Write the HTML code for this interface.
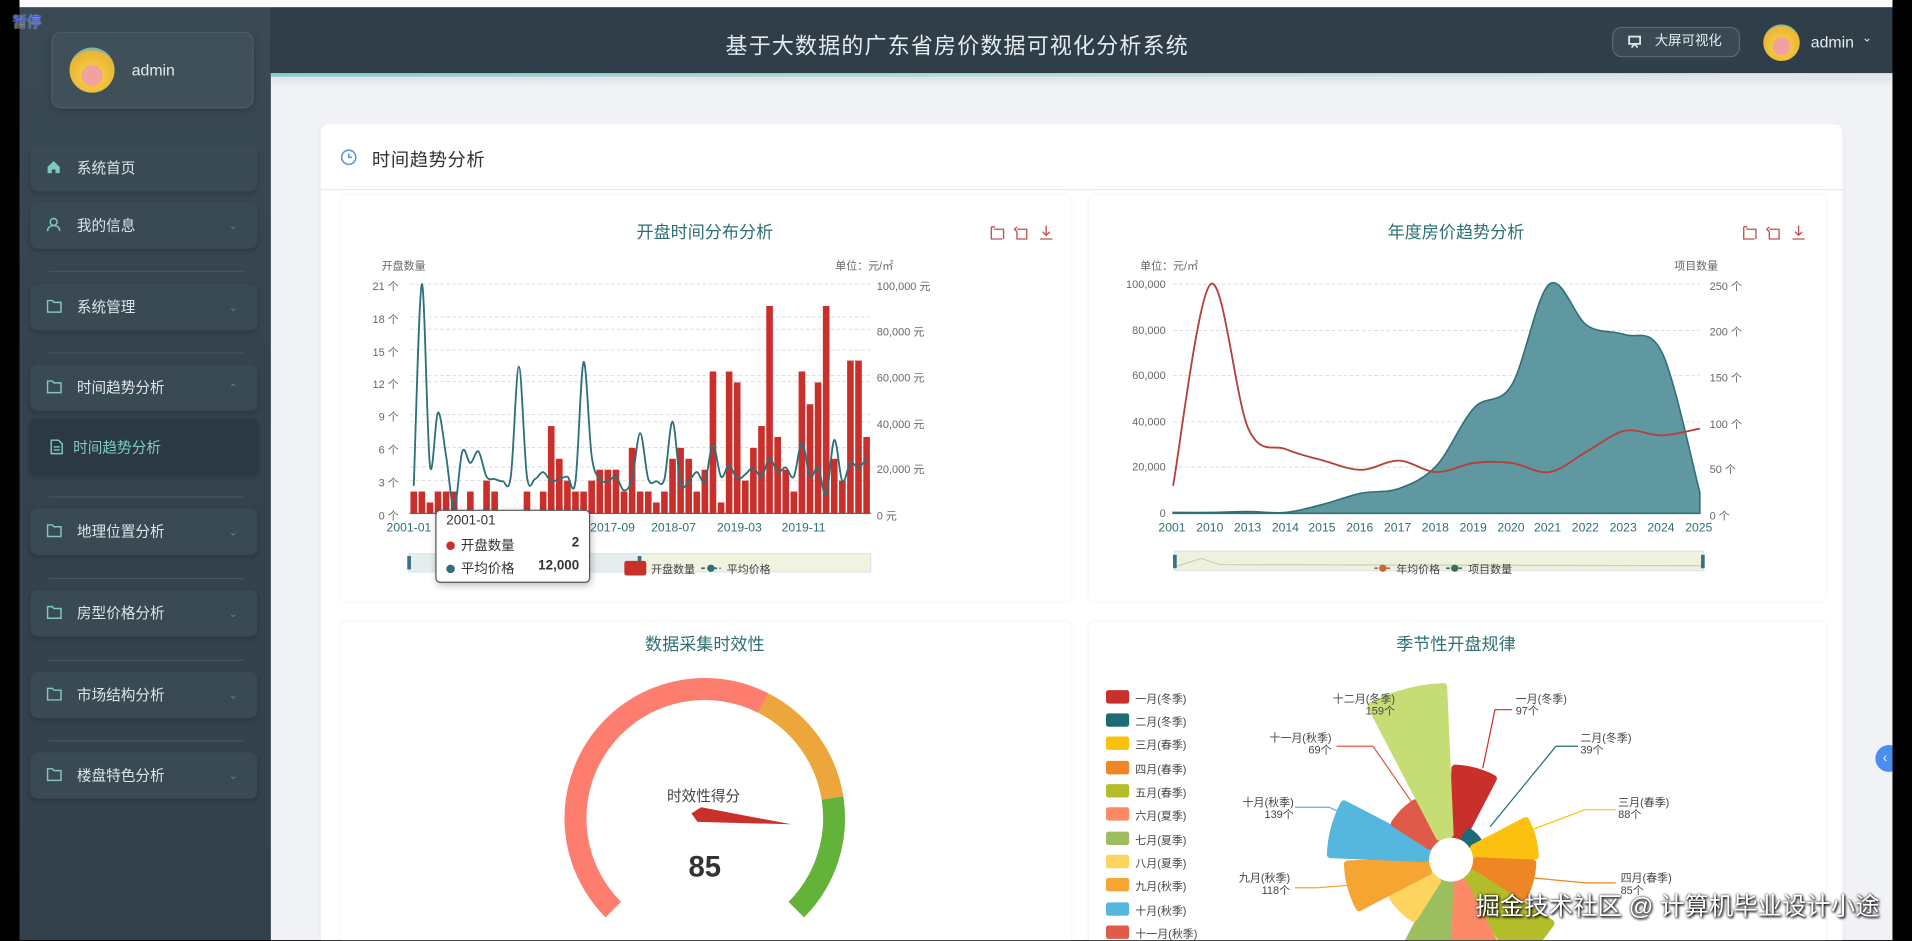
<!DOCTYPE html>
<html><head><meta charset="utf-8">
<style>
*{margin:0;padding:0;box-sizing:border-box}
html,body{width:1912px;height:941px;overflow:hidden;background:#000;font-family:"Liberation Sans","Noto Sans CJK SC",sans-serif}
#s{position:absolute;left:0;top:0;width:1568px;height:771px;transform:scale(1.21939);transform-origin:0 0;overflow:hidden;background:#000}
.a{position:absolute}
.side{left:16px;top:6px;width:206px;height:766px;background:linear-gradient(180deg,#3a4a54,#34434e 40%,#33414c)}
.mi{position:absolute;left:25px;width:186px;height:38px;border-radius:6px;background:#3a4a54;box-shadow:0 2px 4px rgba(0,0,0,.18);color:#dde4e8;font-size:12px;line-height:38px;padding-left:38px}
.mi svg{position:absolute;left:13px;top:12px}
.mi .ch{position:absolute;right:16px;top:0;color:#6b7c86;font-size:9px}
.sep{position:absolute;left:40px;width:160px;height:1px;background:#46565f}
.t{position:absolute;white-space:nowrap}
.ax{font-size:9px;color:#666}
.ttl{font-size:14px;color:#2e6f73;transform:translateX(-50%)}
.panel{position:absolute;background:#fff;border-radius:4px;box-shadow:0 0 4px rgba(0,0,0,.06)}
.lg{font-size:9px;color:#444}
</style></head><body>
<div id="s">
<div class="a" style="left:16px;top:0;width:1536px;height:6px;background:#fbfbfb"></div>
<div class="a" style="left:222px;top:60px;width:1330px;height:712px;background:#f0f2f5"></div>
<div class="a" style="left:222px;top:6px;width:1330px;height:54px;background:#2f3e48"></div>
<div class="a" style="left:222px;top:60px;width:1330px;height:3px;background:linear-gradient(90deg,#8ccaca,#b9dcdc 50%,#dfe9ea);box-shadow:0 3px 6px rgba(0,0,0,.15)"></div>
<div class="t" style="left:785px;top:24px;transform:translateX(-50%);font-size:18px;color:#e6ecef;letter-spacing:1px">基于大数据的广东省房价数据可视化分析系统</div>
<div class="a" style="left:1322px;top:22px;width:105px;height:25px;border-radius:8px;background:#3a4a55;border:1px solid #5a6a75;color:#e6ecef;font-size:11px;line-height:23px;padding-left:34px">大屏可视化</div>
<svg class="a" style="left:1335px;top:29px" width="11" height="11" viewBox="0 0 11 11"><rect x="1" y="1" width="9" height="6" fill="none" stroke="#dfe6ea" stroke-width="1.5"/><path d="M3 10l2.5-3 2.5 3" stroke="#dfe6ea" stroke-width="1.4" fill="none"/></svg>
<div class="a" style="left:1446px;top:20px;width:30px;height:30px;border-radius:50%;background:radial-gradient(circle at 50% 60%,#f2a0a0 0 30%,#f2c640 32%,#e8b534 70%,#7fb6a5 72%)"></div>
<div class="t" style="left:1485px;top:27px;color:#e6ecef;font-size:13px">admin</div>
<div class="t" style="left:1527px;top:26px;color:#dfe6ea;font-size:10px">&#8964;</div>

<div class="a side"></div>
<div class="t" style="left:10px;top:9px;color:#3d58d8;font-size:12px;text-shadow:0 0 1px #fff">暂停</div>
<div class="a" style="left:42px;top:26px;width:166px;height:63px;border-radius:8px;background:#3f5059;border:1px solid #4c5d66;box-shadow:0 2px 6px rgba(0,0,0,.2)"></div>
<div class="a" style="left:57px;top:39px;width:37px;height:37px;border-radius:50%;background:radial-gradient(circle at 50% 62%,#f2a0a0 0 28%,#f2c640 30%,#e8b534 68%,#7fb6a5 72%)"></div>
<div class="t" style="left:108px;top:50px;color:#e2e8ec;font-size:13px">admin</div>

<div class="mi" style="top:119px"><svg width="12" height="12" viewBox="0 0 12 12"><path d="M6 1L1 6v5h3.5V8h3v3H11V6z" fill="#7ec8c0"/></svg>系统首页</div>
<div class="mi" style="top:166px"><svg width="12" height="12" viewBox="0 0 12 12"><circle cx="6" cy="4" r="2.8" fill="none" stroke="#7ec8c0" stroke-width="1.2"/><path d="M1 11.5c0-3 2.2-4.5 5-4.5s5 1.5 5 4.5" fill="none" stroke="#7ec8c0" stroke-width="1.2"/></svg>我的信息<span class="ch">&#8964;</span></div>
<div class="sep" style="top:222px"></div>
<div class="mi" style="top:233px"><svg width="13" height="12" viewBox="0 0 13 12"><path d="M1 1.5h4l1.2 1.5H12v8H1z" fill="none" stroke="#7ec8c0" stroke-width="1.2"/></svg>系统管理<span class="ch">&#8964;</span></div>
<div class="sep" style="top:289px"></div>
<div class="mi" style="top:299px"><svg width="13" height="12" viewBox="0 0 13 12"><path d="M1 1.5h4l1.2 1.5H12v8H1z" fill="none" stroke="#7ec8c0" stroke-width="1.2"/></svg>时间趋势分析<span class="ch">&#8963;</span></div>
<div class="a" style="left:24px;top:343px;width:188px;height:45px;border-radius:6px;background:#2b3944;box-shadow:0 2px 5px rgba(0,0,0,.2)"></div>
<svg class="a" style="left:41px;top:360px" width="11" height="13" viewBox="0 0 11 13"><path d="M1 1h6l3 3v8H1z" fill="none" stroke="#7ec8c0" stroke-width="1.2"/><path d="M3 6.5h5M3 9h5" stroke="#7ec8c0" stroke-width="1.1"/></svg>
<div class="t" style="left:60px;top:358px;color:#7ec8c8;font-size:12px">时间趋势分析</div>
<div class="sep" style="top:407px"></div>
<div class="mi" style="top:417px"><svg width="13" height="12" viewBox="0 0 13 12"><path d="M1 1.5h4l1.2 1.5H12v8H1z" fill="none" stroke="#7ec8c0" stroke-width="1.2"/></svg>地理位置分析<span class="ch">&#8964;</span></div>
<div class="sep" style="top:474px"></div>
<div class="mi" style="top:484px"><svg width="13" height="12" viewBox="0 0 13 12"><path d="M1 1.5h4l1.2 1.5H12v8H1z" fill="none" stroke="#7ec8c0" stroke-width="1.2"/></svg>房型价格分析<span class="ch">&#8964;</span></div>
<div class="sep" style="top:541px"></div>
<div class="mi" style="top:551px"><svg width="13" height="12" viewBox="0 0 13 12"><path d="M1 1.5h4l1.2 1.5H12v8H1z" fill="none" stroke="#7ec8c0" stroke-width="1.2"/></svg>市场结构分析<span class="ch">&#8964;</span></div>
<div class="sep" style="top:607px"></div>
<div class="mi" style="top:617px"><svg width="13" height="12" viewBox="0 0 13 12"><path d="M1 1.5h4l1.2 1.5H12v8H1z" fill="none" stroke="#7ec8c0" stroke-width="1.2"/></svg>楼盘特色分析<span class="ch">&#8964;</span></div>

<div class="a" style="left:263px;top:102px;width:1248px;height:680px;background:#fff;border-radius:6px;box-shadow:0 1px 4px rgba(0,0,0,.06)"></div>
<svg class="a" style="left:279px;top:122px" width="14" height="14" viewBox="0 0 14 14"><circle cx="7" cy="7" r="5.8" fill="none" stroke="#5b9bd5" stroke-width="1.3"/><path d="M7 3.8V7h2.6" fill="none" stroke="#5b9bd5" stroke-width="1.3"/></svg>
<div class="t" style="left:305px;top:120px;font-size:15px;color:#303133;letter-spacing:.5px">时间趋势分析</div>
<div class="a" style="left:263px;top:155px;width:1248px;height:1px;background:#e6e9ee"></div>

<div class="panel" style="left:280px;top:160px;width:598px;height:333px"></div>
<div class="panel" style="left:893px;top:160px;width:604px;height:333px"></div>
<div class="panel" style="left:280px;top:510px;width:598px;height:270px"></div>
<div class="panel" style="left:893px;top:510px;width:604px;height:270px"></div>

<div class="t ttl" style="left:578px;top:180px">开盘时间分布分析</div>
<div class="t ttl" style="left:1194px;top:180px">年度房价趋势分析</div>
<div class="t ttl" style="left:578px;top:518px">数据采集时效性</div>
<div class="t ttl" style="left:1194px;top:518px">季节性开盘规律</div>

<div class="t ax" style="left:313px;top:211px">开盘数量</div>
<div class="t ax" style="left:685px;top:211px">单位：元/㎡</div>
<div class="t ax" style="left:300px;top:228px;width:27px;text-align:right">21 个</div>
<div class="t ax" style="left:300px;top:255px;width:27px;text-align:right">18 个</div>
<div class="t ax" style="left:300px;top:282px;width:27px;text-align:right">15 个</div>
<div class="t ax" style="left:300px;top:308px;width:27px;text-align:right">12 个</div>
<div class="t ax" style="left:300px;top:335px;width:27px;text-align:right">9 个</div>
<div class="t ax" style="left:300px;top:362px;width:27px;text-align:right">6 个</div>
<div class="t ax" style="left:300px;top:389px;width:27px;text-align:right">3 个</div>
<div class="t ax" style="left:300px;top:416px;width:27px;text-align:right">0 个</div>
<div class="t ax" style="left:719px;top:228px">100,000 元</div>
<div class="t ax" style="left:719px;top:265px">80,000 元</div>
<div class="t ax" style="left:719px;top:303px">60,000 元</div>
<div class="t ax" style="left:719px;top:341px">40,000 元</div>
<div class="t ax" style="left:719px;top:378px">20,000 元</div>
<div class="t ax" style="left:719px;top:416px">0 元</div>
<div class="t ax" style="left:317px;top:428px;color:#2e6f73;font-size:10px">2001-01</div>
<div class="t ax" style="left:484px;top:428px;color:#2e6f73;font-size:10px">2017-09</div>
<div class="t ax" style="left:534px;top:428px;color:#2e6f73;font-size:10px">2018-07</div>
<div class="t ax" style="left:588px;top:428px;color:#2e6f73;font-size:10px">2019-03</div>
<div class="t ax" style="left:641px;top:428px;color:#2e6f73;font-size:10px">2019-11</div>

<div class="t ax" style="left:935px;top:211px">单位：元/㎡</div>
<div class="t ax" style="left:1373px;top:211px">项目数量</div>
<div class="t ax" style="left:910px;top:228px;width:46px;text-align:right">100,000</div>
<div class="t ax" style="left:910px;top:266px;width:46px;text-align:right">80,000</div>
<div class="t ax" style="left:910px;top:303px;width:46px;text-align:right">60,000</div>
<div class="t ax" style="left:910px;top:341px;width:46px;text-align:right">40,000</div>
<div class="t ax" style="left:910px;top:378px;width:46px;text-align:right">20,000</div>
<div class="t ax" style="left:910px;top:416px;width:46px;text-align:right">0</div>
<div class="t ax" style="left:1402px;top:228px">250 个</div>
<div class="t ax" style="left:1402px;top:265px">200 个</div>
<div class="t ax" style="left:1402px;top:303px">150 个</div>
<div class="t ax" style="left:1402px;top:341px">100 个</div>
<div class="t ax" style="left:1402px;top:378px">50 个</div>
<div class="t ax" style="left:1402px;top:416px">0 个</div>
<div class="t ax" style="left:950px;top:428px;font-size:10px;color:#2e6f73">
<span style="position:absolute;left:0">2001</span><span style="position:absolute;left:31px">2010</span><span style="position:absolute;left:62px">2013</span><span style="position:absolute;left:93px">2014</span><span style="position:absolute;left:123px">2015</span><span style="position:absolute;left:154px">2016</span><span style="position:absolute;left:185px">2017</span><span style="position:absolute;left:216px">2018</span><span style="position:absolute;left:247px">2019</span><span style="position:absolute;left:278px">2020</span><span style="position:absolute;left:308px">2021</span><span style="position:absolute;left:339px">2022</span><span style="position:absolute;left:370px">2023</span><span style="position:absolute;left:401px">2024</span><span style="position:absolute;left:432px">2025</span></div>

<svg class="a" style="left:0;top:0" width="1568" height="771" id="cv">
<g stroke="#ddd" stroke-dasharray="3,2" stroke-width="0.8">
<line x1="336" y1="233" x2="714" y2="233"/><line x1="336" y1="260" x2="714" y2="260"/><line x1="336" y1="287" x2="714" y2="287"/><line x1="336" y1="313" x2="714" y2="313"/><line x1="336" y1="340" x2="714" y2="340"/><line x1="336" y1="367" x2="714" y2="367"/><line x1="336" y1="394" x2="714" y2="394"/>
<line x1="336" y1="270" x2="714" y2="270"/><line x1="336" y1="308" x2="714" y2="308"/><line x1="336" y1="346" x2="714" y2="346"/><line x1="336" y1="383" x2="714" y2="383"/>
<line x1="962" y1="233" x2="1394" y2="233"/><line x1="962" y1="271" x2="1394" y2="271"/><line x1="962" y1="308" x2="1394" y2="308"/><line x1="962" y1="346" x2="1394" y2="346"/><line x1="962" y1="383" x2="1394" y2="383"/>
</g>
<line x1="336" y1="421" x2="714" y2="421" stroke="#2e6f73"/><line x1="962" y1="421" x2="1394" y2="421" stroke="#2e6f73"/>
<g id="bars" fill="#c9302c"></g>
<path id="l1" fill="none" stroke="#2e6f7a" stroke-width="1.5"/>
<path id="ar" fill="#5f98a0" stroke="#2e6f7a" stroke-width="1.3"/>
<path id="l2" fill="none" stroke="#b5403a" stroke-width="1.5"/>
<g fill="none" stroke="#c0504d" stroke-width="1.1">
<path d="M813 186v10h9M815 188h8v8M816 186h-3"/><path d="M834 188h8v8h-8v-6M834 186l-2 2 2 2"/><path d="M858 185v8M855 190l3 3 3-3M853 196h10"/>
<path d="M1430 186v10h9M1432 188h8v8M1433 186h-3"/><path d="M1451 188h8v8h-8v-6M1451 186l-2 2 2 2"/><path d="M1475 185v8M1472 190l3 3 3-3M1470 196h10"/>
</g>
<rect x="335" y="454" width="379" height="15" fill="#eff3e0" stroke="#dfe4ea"/>
<rect x="335" y="454" width="190" height="15" fill="#e3e9f2" opacity=".7"/>
<rect x="334" y="456" width="3" height="11" fill="#3a6f86"/><rect x="523" y="456" width="3" height="11" fill="#3a6f86"/>
<rect x="963" y="452" width="434" height="16" fill="#eef2dc" stroke="#dfe4ea"/>
<path d="M963 465 L985 458 L1000 463 L1397 464" stroke="#c8cfc0" fill="none"/>
<rect x="962" y="455" width="3" height="11" fill="#3a6f86"/><rect x="1395" y="455" width="3" height="11" fill="#3a6f86"/>
<rect x="512" y="460" width="18" height="12" rx="2" fill="#c9302c"/>
<path d="M575 466h16" stroke="#2e6f7a" stroke-width="1.5" stroke-dasharray="3,2"/><circle cx="583" cy="466" r="3" fill="#2e6f7a"/>
<path d="M1127 466h14" stroke="#d0623a" stroke-width="1.5" stroke-dasharray="3,2"/><circle cx="1134" cy="466" r="3" fill="#d0623a"/>
<path d="M1186 466h14" stroke="#3a6f5a" stroke-width="1.5" stroke-dasharray="3,2"/><circle cx="1193" cy="466" r="3" fill="#3a6f5a"/>
<g fill="none" stroke-width="18">
<path d="M503 746 A106 106 0 0 1 626.1 576.6" stroke="#fd7d6e"/>
<path d="M626.1 576.6 A106 106 0 0 1 682.7 654.4" stroke="#eda63b"/>
<path d="M682.7 654.4 A106 106 0 0 1 653 746" stroke="#63b23a"/>
</g>
<polygon points="567,667 575,662 649,676 572,674" fill="#c9302c"/>
<g fill="none" stroke-width="1">
<polyline points="1176,592 1172,578 1164,578" stroke="#c6dd75"/>
<polyline points="1216,630 1226,582 1240,582" stroke="#c9302c"/>
<polyline points="1222,678 1276,612 1294,612" stroke="#1e6b78"/>
<polyline points="1252,682 1300,664 1325,664" stroke="#fcc10f"/>
<polyline points="1258,720 1300,724 1325,724" stroke="#ef8625"/>
<polyline points="1118,725 1080,728 1062,728" stroke="#f6a533"/>
<polyline points="1112,672 1090,662 1062,662" stroke="#55b7dd"/>
<polyline points="1162,664 1126,612 1096,612" stroke="#df5a48"/>
</g>
<g id="rose"></g>
<g>
<rect x="907" y="566" width="19" height="11" rx="2" fill="#c9302c"/><rect x="907" y="585" width="19" height="11" rx="2" fill="#1e6b78"/><rect x="907" y="604" width="19" height="11" rx="2" fill="#fcc10f"/><rect x="907" y="624" width="19" height="11" rx="2" fill="#ef8625"/><rect x="907" y="643" width="19" height="11" rx="2" fill="#b3bd2a"/><rect x="907" y="662" width="19" height="11" rx="2" fill="#fd8a66"/><rect x="907" y="682" width="19" height="11" rx="2" fill="#9dbe5f"/><rect x="907" y="701" width="19" height="11" rx="2" fill="#fcd45e"/><rect x="907" y="720" width="19" height="11" rx="2" fill="#f6a533"/><rect x="907" y="740" width="19" height="11" rx="2" fill="#55b7dd"/><rect x="907" y="759" width="19" height="11" rx="2" fill="#df5a48"/>
</g>
</svg>
<div class="t lg" style="left:534px;top:460px">开盘数量</div>
<div class="t lg" style="left:596px;top:460px">平均价格</div>
<div class="t lg" style="left:1145px;top:460px">年均价格</div>
<div class="t lg" style="left:1204px;top:460px">项目数量</div>
<div class="t lg" style="left:931px;top:566px">一月(冬季)</div>
<div class="t lg" style="left:931px;top:585px">二月(冬季)</div>
<div class="t lg" style="left:931px;top:604px">三月(春季)</div>
<div class="t lg" style="left:931px;top:624px">四月(春季)</div>
<div class="t lg" style="left:931px;top:643px">五月(春季)</div>
<div class="t lg" style="left:931px;top:662px">六月(夏季)</div>
<div class="t lg" style="left:931px;top:682px">七月(夏季)</div>
<div class="t lg" style="left:931px;top:701px">八月(夏季)</div>
<div class="t lg" style="left:931px;top:720px">九月(秋季)</div>
<div class="t lg" style="left:931px;top:740px">十月(秋季)</div>
<div class="t lg" style="left:931px;top:759px">十一月(秋季)</div>
<div class="t lg" style="left:1093px;top:568px;line-height:10px;text-align:right">十二月(冬季)<br>159个</div>
<div class="t lg" style="left:1243px;top:568px;line-height:10px">一月(冬季)<br>97个</div>
<div class="t lg" style="left:1296px;top:600px;line-height:10px">二月(冬季)<br>39个</div>
<div class="t lg" style="left:1327px;top:653px;line-height:10px">三月(春季)<br>88个</div>
<div class="t lg" style="left:1329px;top:715px;line-height:10px">四月(春季)<br>85个</div>
<div class="t lg" style="left:1016px;top:715px;line-height:10px;text-align:right">九月(秋季)<br>118个</div>
<div class="t lg" style="left:1019px;top:653px;line-height:10px;text-align:right">十月(秋季)<br>139个</div>
<div class="t lg" style="left:1041px;top:600px;line-height:10px;text-align:right">十一月(秋季)<br>69个</div>

<div class="t" style="left:547px;top:644px;font-size:12px;color:#444">时效性得分</div>
<div class="t" style="left:578px;top:698px;transform:translateX(-50%);font-size:24px;font-weight:bold;color:#333">85</div>

<div class="a" style="left:357px;top:418px;width:127px;height:60px;background:#fff;border:1px solid #555;border-radius:4px;box-shadow:1px 2px 6px rgba(0,0,0,.25);font-size:11px;color:#333">
<div class="t" style="left:8px;top:2px">2001-01</div>
<div class="t" style="left:8px;top:20px"><span style="display:inline-block;width:7px;height:7px;border-radius:50%;background:#c9302c;margin-right:5px"></span>开盘数量</div>
<div class="t" style="right:8px;top:20px;font-weight:bold">2</div>
<div class="t" style="left:8px;top:39px"><span style="display:inline-block;width:7px;height:7px;border-radius:50%;background:#2e6f7a;margin-right:5px"></span>平均价格</div>
<div class="t" style="right:8px;top:39px;font-weight:bold">12,000</div>
</div>

<div class="a" style="left:1538px;top:611px;width:22px;height:22px;border-radius:50%;background:#4a8ff0;color:#fff;font-size:11px;line-height:22px;padding-left:6px">&lsaquo;</div>
<div class="t" style="left:1210px;top:727px;font-size:20px;color:#fff;text-shadow:0 0 2px #000,1px 1px 2px #000">掘金技术社区 @ 计算机毕业设计小途</div>
<div class="a" style="left:1552px;top:0;width:16px;height:771px;background:#000"></div>
</div>
<script>
(function(){
var ns="http://www.w3.org/2000/svg";
function cr(p){var d="M"+p[0][0]+" "+p[0][1];for(var i=0;i<p.length-1;i++){var p0=p[i-1]||p[i],p1=p[i],p2=p[i+1],p3=p[i+2]||p2;
d+=" C"+(p1[0]+(p2[0]-p0[0])/6)+" "+(p1[1]+(p2[1]-p0[1])/6)+" "+(p2[0]-(p3[0]-p1[0])/6)+" "+(p2[1]-(p3[1]-p1[1])/6)+" "+p2[0]+" "+p2[1];}return d;}
var b=[2,2,1,2,2,2,0,2,0,3,2,0,0,0,2,0,2,8,5,3,2,2,3,4,4,4,2,6,2,2,1,2,5,6,5,2,4,13,1,13,12,3,6,8,19,7,4,2,13,10,12,19,5,3,14,14,7];
var n=b.length,w=(714-336)/n,g=document.getElementById("bars");
var pr=[12,100,21,44,25,2,27,22,27,16,15,14,16,64,16,15,18,14,15,16,14,66,25,15,14,16,10,15,35,15,14,15,40,13,14,18,14,30,16,21,15,17,20,16,24,18,20,16,31,16,20,8,32,14,22,20,24];
var pts=[];
for(var i=0;i<n;i++){var r=document.createElementNS(ns,"rect");var h=b[i]*8.95;r.setAttribute("x",336+i*w+0.6);r.setAttribute("y",421-h);r.setAttribute("width",w-1.2);r.setAttribute("height",h);g.appendChild(r);
pts.push([336+i*w+w/2,421-pr[i]*1.88]);}
document.getElementById("l1").setAttribute("d",cr(pts));
var cnt=[1,1,2,1,10,22,27,52,115,140,250,205,195,175,23],pz=[12,100,37,28,23,19,23,18,22,22,18,27,36,34,37];
var a=[],l=[];for(var i=0;i<15;i++){var x=962+i*30.857;a.push([x,421-cnt[i]/250*188]);l.push([x,421-pz[i]*1.88]);}
document.getElementById("ar").setAttribute("d",cr(a)+" L1394 421 L962 421 Z");
document.getElementById("l2").setAttribute("d",cr(l));
var cols=["#c9302c","#1e6b78","#fcc10f","#ef8625","#b3bd2a","#fd8a66","#9dbe5f","#fcd45e","#f6a533","#55b7dd","#df5a48","#c6dd75"];
var rr=[78,30,72,70,100,106,92,60,88,102,58,145];var cx=1190,cy=705,ri=18,rg=document.getElementById("rose");
function P(r,t){return (cx+r*Math.sin(t)).toFixed(1)+" "+(cy-r*Math.cos(t)).toFixed(1);}
for(var i=0;i<12;i++){var a0=(i*30+2.5)*Math.PI/180,a1=((i+1)*30-2.5)*Math.PI/180,R=rr[i];
var d="M"+P(ri+3,a0)+" L"+P(R-3,a0)+" A"+(R-3)+" "+(R-3)+" 0 0 1 "+P(R-3,a1)+" L"+P(ri+3,a1)+" A"+(ri+3)+" "+(ri+3)+" 0 0 0 "+P(ri+3,a0)+"Z";
var p=document.createElementNS(ns,"path");p.setAttribute("d",d);p.setAttribute("fill",cols[i]);p.setAttribute("stroke",cols[i]);p.setAttribute("stroke-width","6");p.setAttribute("stroke-linejoin","round");rg.appendChild(p);}
})();
</script>
</body></html>
